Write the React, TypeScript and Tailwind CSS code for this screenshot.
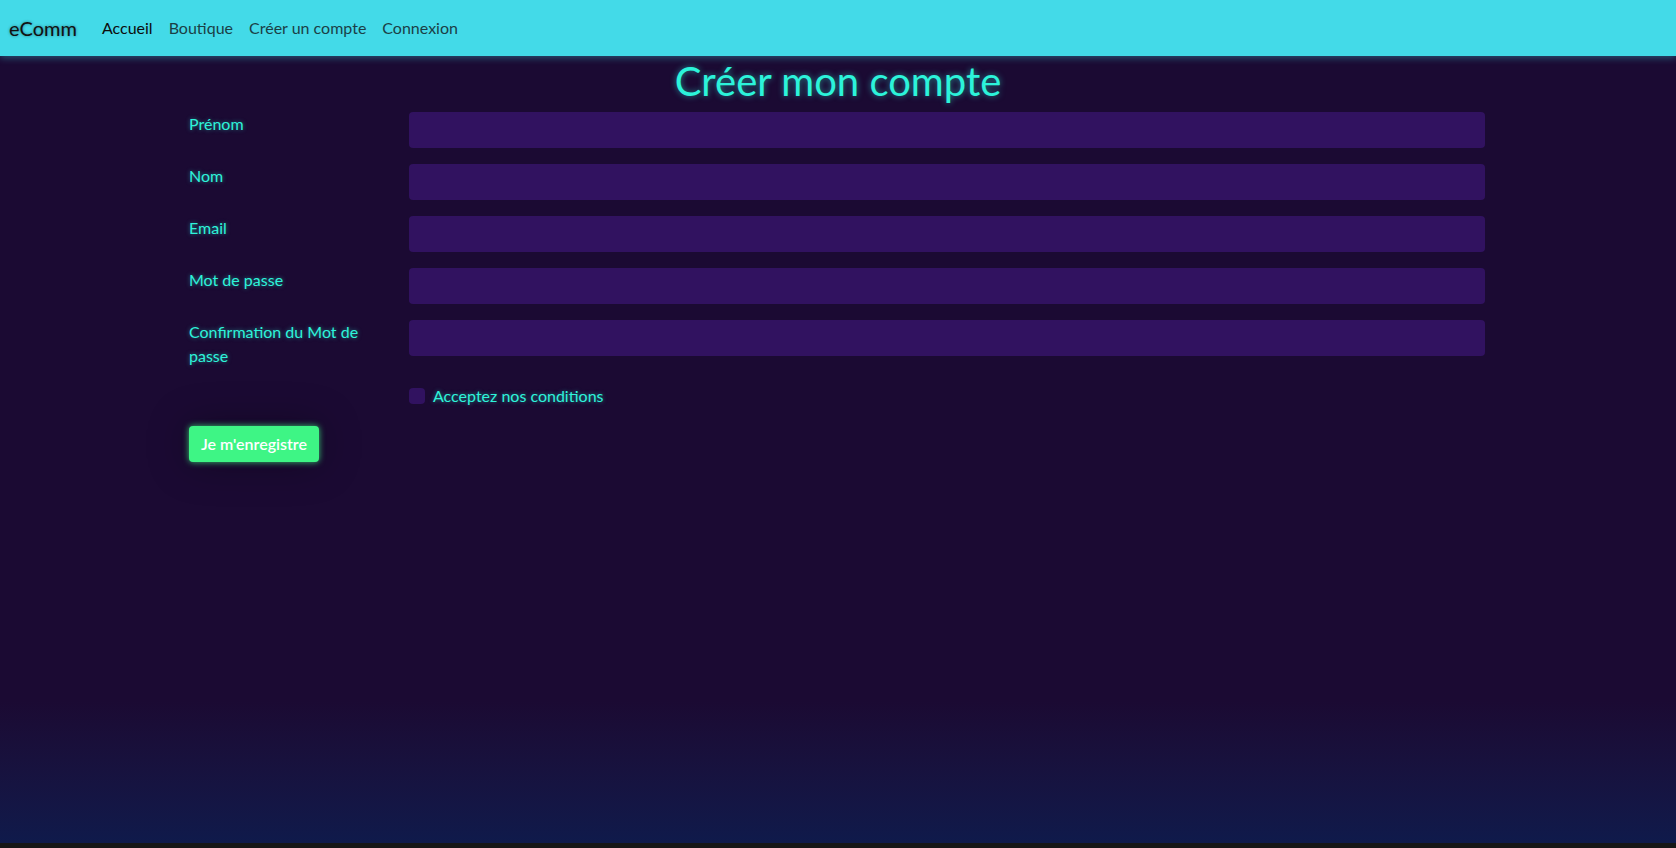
const fields = [
  { label: "Prénom", type: "text" },
  { label: "Nom", type: "text" },
  { label: "Email", type: "email" },
  { label: "Mot de passe", type: "password" },
  { label: "Confirmation du Mot de passe", type: "password" },
];

const links = ["Accueil", "Boutique", "Créer un compte", "Connexion"];

export default function App() {
  return (
    <div className="flex min-h-[848px] flex-col bg-[#1b0a33] font-['Lato','Liberation_Sans',sans-serif]">
      <nav className="relative z-10 flex h-14 items-center bg-[#43dae8] pl-[9px] shadow-[0_2px_7px_rgba(67,218,232,0.35)]">
        <a className="mr-[17px] text-xl text-[#111] [text-shadow:0_0_3px_rgba(0,0,0,0.45)]">eComm</a>
        <ul className="flex">
          {links.map((l, i) => (
            <li key={l}>
              <a className={"px-2 text-base " + (i === 0 ? "text-[#0d0d0d]" : "text-[#1b3f46]")}>{l}</a>
            </li>
          ))}
        </ul>
      </nav>

      <main className="flex-1 bg-gradient-to-b from-[#1b0a33] from-[82%] to-[#0f1a4b]">
        <h1 className="mt-px mb-[7px] text-center text-[40px] leading-[1.2] text-[#2cf3da] [text-shadow:0_0_6px_rgba(44,243,218,0.55)]">
          Créer mon compte
        </h1>
        <form className="mx-auto w-[1298px] pr-[2px]">
          {fields.map((f) => (
            <div key={f.label} className="mb-4 flex">
              <label className="w-[196px] shrink-0 text-base leading-6 text-[#2ef3da] [text-shadow:0_0_4px_rgba(46,243,218,0.5)]">
                {f.label}
              </label>
              <input
                type={f.type}
                className="ml-6 h-9 flex-1 rounded bg-[#311260] px-3 text-white outline-none"
              />
            </div>
          ))}
          <div className="mb-[18px] flex pl-[220px]">
            <label className="flex items-center gap-2 text-base leading-6 text-[#2ef3da] [text-shadow:0_0_4px_rgba(46,243,218,0.5)]">
              <input type="checkbox" className="h-4 w-4 appearance-none rounded bg-[#311260]" />
              Acceptez nos conditions
            </label>
          </div>
          <button
            type="button"
            className="h-9 w-[130px] rounded bg-[#3ef585] text-base font-semibold text-white shadow-[0_0_6px_rgba(62,245,133,0.8),0_0_40px_rgba(0,0,0,0.35)]"
          >
            Je m'enregistre
          </button>
        </form>
      </main>
      <div className="h-[5px] bg-[#161616]" />
    </div>
  );
}
